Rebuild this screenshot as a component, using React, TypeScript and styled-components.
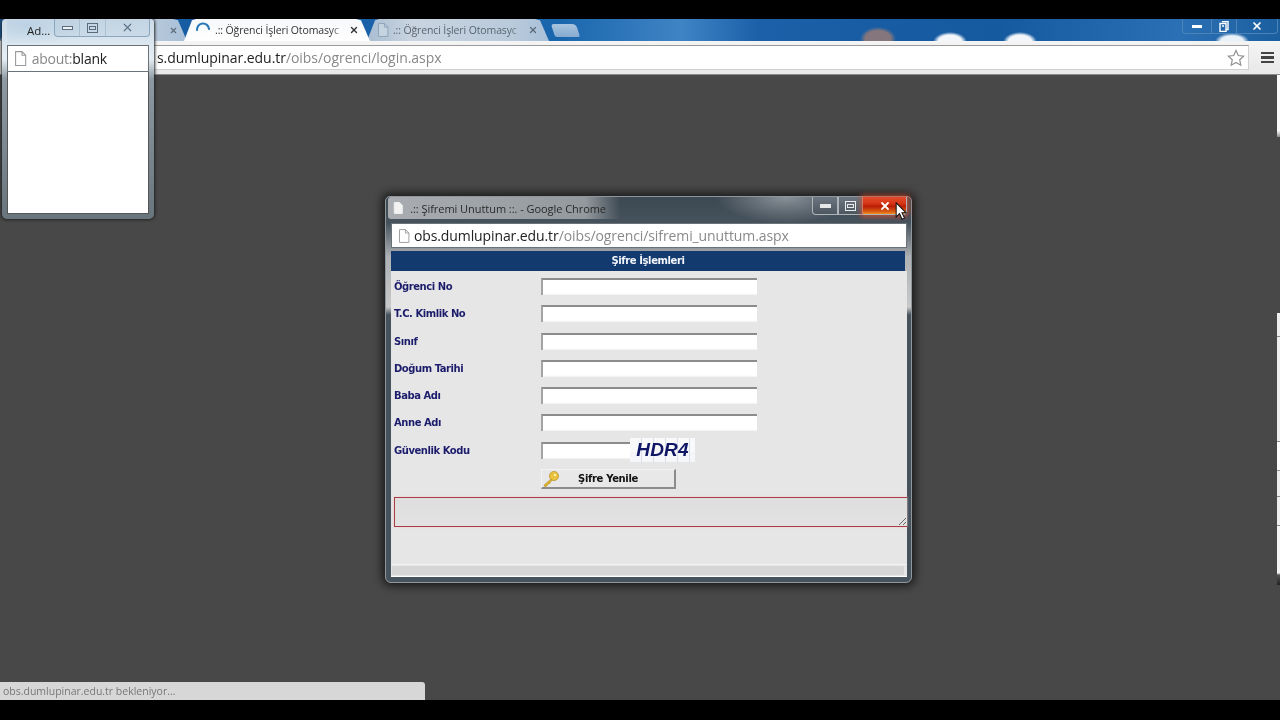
import React from "react";
import styled, { createGlobalStyle } from "styled-components";
import { X } from "lucide-react";

const Global = createGlobalStyle`
  html, body { margin: 0; padding: 0; background: #000; }
  #root { width: 1280px; height: 720px; overflow: hidden; }
`;

const uiFont = `"Open Sans", "Noto Sans", "Liberation Sans", sans-serif`;
const formFont = `"DejaVu Sans", "Liberation Sans", sans-serif`;

const Page = styled.div`
  width: 1280px; height: 720px; background: #000;
  display: flex; flex-direction: column; overflow: hidden;
  font-family: ${uiFont};
`;
const BlackBar = styled.div<{ $h: number }>`
  height: ${(p) => p.$h}px; flex: none; background: #000;
`;
const Screen = styled.div`
  flex: 1; position: relative; display: flex; flex-direction: column;
  overflow: hidden; filter: blur(0.35px); background: #484848;
`;

/* ---------- back browser ---------- */
const TabStrip = styled.div`
  height: 22px; flex: none; display: flex; align-items: flex-end; position: relative;
  background:
    radial-gradient(ellipse 18px 12px at 878px 20px, #84767c 0 70%, transparent 100%),
    radial-gradient(ellipse 17px 10px at 950px 23px, #f2f6fa 0 70%, transparent 100%),
    radial-gradient(ellipse 17px 10px at 1020px 23px, #f2f6fa 0 70%, transparent 100%),
    radial-gradient(ellipse 17px 8px at 1232px 22px, #e8f0f8 0 65%, transparent 100%),
    linear-gradient(90deg, #14589f 0, #1a66ad 560px, #3f84c4 680px, #1b60a8 760px, #155a9f 1000px, #2b70b4 1180px, #1c5f9f 1280px);
`;
const Tab = styled.div<{ $active?: boolean; $w: number; $pad: number }>`
  width: ${(p) => p.$w}px; flex: none; height: 22px; box-sizing: border-box;
  padding-left: ${(p) => p.$pad}px; padding-right: 11px;
  display: flex; align-items: center; gap: 4px;
  margin-right: -3px;
  clip-path: polygon(0 100%, 8px 6%, 12px 0, calc(100% - 14px) 0, calc(100% - 9px) 6%, 100% 100%);
  background: ${(p) => (p.$active ? "linear-gradient(#f6f8fb, #ffffff)" : "linear-gradient(90deg, #a9bdd2, #c9d4e0 25%, #b9cadb 80%, #a8c0d8)")};
  position: relative;
  z-index: ${(p) => (p.$active ? 2 : 1)};
`;
const TabTitle = styled.span<{ $active?: boolean }>`
  flex: 1; font-size: 10.5px; line-height: 22px; white-space: nowrap; letter-spacing: -0.12px;
  color: ${(p) => (p.$active ? "#333" : "#5a6570")};
  -webkit-mask-image: linear-gradient(90deg, #000 88%, rgba(0,0,0,.25));
  mask-image: linear-gradient(90deg, #000 88%, rgba(0,0,0,.25));
`;
const TabClose = styled(X)<{ $dim?: boolean }>`
  flex: none; color: ${(p) => (p.$dim ? "#5a6a78" : "#333")};
`;
const NewTab = styled.div`
  width: 25px; height: 13px; margin: 0 0 4px 7px; flex: none;
  background: linear-gradient(#a9c4de, #86abd0); border-radius: 3px 4px 2px 2px;
  transform: skewX(18deg);
`;
const WinControls = styled.div`
  position: absolute; right: 2px; top: 0; height: 15px; width: 96px;
  display: flex; align-items: center; color: #fff;
  border: 1px solid #4c83b8; border-top: none; border-radius: 0 0 4px 4px; box-sizing: border-box;
`;
const WinSlot = styled.div<{ $w: number; $line?: boolean }>`
  width: ${(p) => p.$w}px; height: 100%; display: flex; align-items: center; justify-content: center;
  border-left: ${(p) => (p.$line ? "1px solid #4c83b8" : "none")}; box-sizing: border-box;
`;
const Toolbar = styled.div`
  height: 34px; flex: none; box-sizing: border-box;
  background: linear-gradient(#f4f4f4, #e8e8e8);
  border-bottom: 1px solid #8a8a8a;
  padding: 4px 6px 4px 152px; display: flex; align-items: stretch;
`;
const Omnibox = styled.div`
  flex: 1; background: #fff; border: 1px solid #d0d0d0; border-left: none; border-top-color: #9a9a9a;
  display: flex; align-items: center; padding: 0 3px 0 5px;
`;
const UrlText = styled.span<{ $ls: number }>`
  font-size: 14px; color: #888; white-space: nowrap; letter-spacing: ${(p) => p.$ls}px;
`;
const UrlHost = styled.span`
  color: #222;
`;
const Spacer = styled.div`
  flex: 1;
`;
const MenuIcon = styled.div`
  width: 13px; margin-left: 12px; align-self: center;
  display: flex; flex-direction: column; gap: 2px;
`;
const MenuBar = styled.div`
  height: 2.5px; background: #444;
`;
const Content = styled.div`
  flex: 1; background: #484848;
`;

/* ---------- right sliver: another window behind ---------- */
const Sliver = styled.div<{ $top: number; $h: number; $lines?: boolean }>`
  position: absolute; left: 1277px; width: 3px;
  top: ${(p) => p.$top}px; height: ${(p) => p.$h}px;
  background: ${(p) => p.$lines
    ? "linear-gradient(#eee 0 23px, #8a8a8a 23px 24px, #eee 24px 128px, #8a8a8a 128px 129px, #fff 129px 157px, #999 157px 158px, #eee 158px 183px, #8a8a8a 183px 184px, #eee 184px 212px, #8a8a8a 212px 213px, #f4f4f4 213px 260px, #555 262px, #222 100%)"
    : "linear-gradient(#fafafa 0 90%, #888 100%)"};
`;

/* ---------- floating windows ---------- */
const SmallWindow = styled.div`
  position: absolute; left: 2px; top: 0; width: 152px; height: 200px; box-sizing: border-box;
  border-radius: 4px 4px 5px 5px;
  background: linear-gradient(#cbdbe8 0, #e6eef4 40px, #8d9aa3 60px, #68757d 100%);
  box-shadow: 0 0 3px 1px #222;
  display: flex; flex-direction: column; padding: 0 5px 5px 5px;
  z-index: 5;
`;
const SmallTitle = styled.div`
  height: 26px; flex: none; display: flex; justify-content: flex-end; align-items: flex-start; position: relative;
  background: radial-gradient(ellipse 60px 20px at 20px 6px, #bcd2e4, transparent);
`;
const SmallTitleText = styled.span`
  position: absolute; left: 20px; top: 4px; font-size: 11.5px; line-height: 16px; color: #222;
`;
const SmallControls = styled.div`
  width: 96px; height: 18px; margin-right: -1px; display: flex; color: #5f7488;
  border: 1px solid #8ba7bf; border-top: none; border-radius: 0 0 4px 4px; box-sizing: border-box;
  background: rgba(180, 200, 218, .35);
`;
const SmallSlot = styled.div<{ $w: number }>`
  width: ${(p) => p.$w}px; display: flex; align-items: center; justify-content: center;
  border-right: 1px solid #a9c0d2; box-sizing: border-box;
  &:last-child { border-right: none; }
`;
const MinGlyph = styled.div<{ $c: string }>`
  width: 11px; height: 4px; box-sizing: border-box; border: 1px solid ${(p) => p.$c}; background: #eef3f7;
`;
const MaxGlyph = styled.div<{ $c: string }>`
  width: 11px; height: 10px; box-sizing: border-box; border: 1px solid ${(p) => p.$c}; position: relative;
  display: flex; align-items: center; justify-content: center;
  &::after { content: ""; width: 5px; height: 2px; border: 1px solid ${(p) => p.$c}; }
`;
const AddrBar = styled.div<{ $h: number }>`
  height: ${(p) => p.$h}px; flex: none; background: #fff; box-sizing: border-box;
  border: 1px solid #6c7378; display: flex; align-items: center; padding-left: 6px; gap: 5px;
`;
const BlankPage = styled.div`
  flex: 1; background: #fff; border: 1px solid #555; border-top: none;
`;

const MainWindow = styled.div`
  position: absolute; left: 385px; top: 177px; width: 527px; height: 387px; box-sizing: border-box;
  border-radius: 5px 5px 6px 6px;
  border: 1px solid #8f979d;
  background: linear-gradient(#3c4852 0, #46525c 26px, #aeb2b5 60px, #c8c8c8 110px, #46525c 118px, #46525c 100%);
  box-shadow: 0 0 8px 3px rgba(15, 15, 15, .8);
  display: flex; flex-direction: column; padding: 0 4px 5px 5px;
  z-index: 6;
`;
const MainTitle = styled.div`
  height: 26px; flex: none; display: flex; align-items: flex-start; position: relative;
  background: radial-gradient(ellipse 70px 26px at 395px 0, rgba(190, 195, 200, .6), transparent);
`;
const TitleGlow = styled.div`
  display: flex; align-items: center; gap: 7px; height: 22px; margin-left: -3px; padding: 0 14px 0 5px;
  background: linear-gradient(90deg, #a9adb1, #94999e 85%, transparent);
  border-radius: 3px;
`;
const TitleText = styled.span`
  font-size: 11px; color: #2a2a2a; white-space: nowrap; letter-spacing: -0.05px;
`;
const MainControls = styled.div`
  margin-left: auto; width: 95px; height: 18px; display: flex; box-sizing: border-box; color: #fff;
`;
const MainSlot = styled.div<{ $w: number; $close?: boolean }>`
  width: ${(p) => p.$w}px; display: flex; align-items: center; justify-content: center; box-sizing: border-box;
  border: 1px solid #aeb4b8; border-top: none; border-left-width: ${(p) => (p.$close ? 0 : 1)}px;
  background: ${(p) => p.$close ? "linear-gradient(#e0492a 0, #d9391b 35%, #b81e05 55%, #d95b14 85%, #f09020 100%)" : "linear-gradient(#6c7680, #4c5761)"};
  border-radius: ${(p) => (p.$close ? "0 0 4px 0" : "0")};
  box-shadow: ${(p) => (p.$close ? "0 0 5px 2px rgba(225, 80, 45, .75)" : "none")};
  &:first-child { border-radius: 0 0 0 4px; }
`;
const UrlBig = styled.span`
  font-size: 14px; color: #8a8a8a; white-space: nowrap; letter-spacing: -0.1px; margin-left: -1px;
`;
const FormHeader = styled.div`
  height: 20px; flex: none; margin: 3px 2px 0 0; background: #123a6f; color: #f2f5fa;
  font: bold 10px/20px ${formFont}; text-align: center; letter-spacing: -0.4px;
`;
const FormBody = styled.div`
  flex: 1; background: #e6e6e6; padding-top: 2px; display: flex; flex-direction: column; min-height: 0;
`;
const Row = styled.div`
  height: 27.25px; flex: none; display: grid; grid-template-columns: 150px auto 1fr; align-items: center;
`;
const Label = styled.label`
  padding-left: 3px; font: bold 10px ${formFont}; color: #1c1c6c; letter-spacing: -0.45px; white-space: nowrap;
`;
const Input = styled.div<{ $w?: number }>`
  width: ${(p) => p.$w ?? 216}px; height: 17px; box-sizing: border-box; background: linear-gradient(#fff 88%, #f0f0f0);
  border-top: 2px solid #8c8c8c; border-left: 2px solid #a4a4a4;
`;
const Captcha = styled.div`
  width: 65px; height: 24px; background:
    repeating-linear-gradient(90deg, transparent 0 11px, #d8dde8 11px 12px),
    linear-gradient(#f8f9fb 60%, #e0e4ee 62%, #f5f6f9 65%);
  color: #0f1666; font: italic bold 19px "Liberation Sans", sans-serif; text-align: center; line-height: 24px; letter-spacing: 0.2px;
`;
const InlineField = styled.div`
  display: flex; align-items: center;
`;
const ButtonRow = styled.div`
  margin: 5px 0 0 150px;
`;
const RenewButton = styled.div`
  width: 135px; height: 20px; box-sizing: border-box; position: relative;
  background: #e8e8e8; border-right: 2px solid #8c8c8c; border-bottom: 2px solid #8c8c8c; border-top: 1px solid #f2f2f2; border-left: 1px solid #f2f2f2;
  font: bold 10px/18px ${formFont}; letter-spacing: -0.35px; color: #111; text-align: center;
`;
const KeyIcon = styled.svg`
  position: absolute; left: 0; top: 0;
`;
const MessageBox = styled.div`
  height: 30px; flex: none; margin: 8px 0 0 3px; box-sizing: border-box; position: relative;
  border: 1px solid #a83e44; border-right: none; background: linear-gradient(#dedede, #e2e2e2);
  box-shadow: 0 0 2px #f3c6c6;
`;
const ResizeGrip = styled.svg`
  position: absolute; right: 0; bottom: 0;
`;
const Fill = styled.div`
  flex: 1;
`;
const HScroll = styled.div`
  height: 13px; flex: none; border-top: 1px solid #f2f2f2; padding: 1px 3px 1px 1px; box-sizing: border-box; border-bottom: 1px solid #fff;
`;
const HThumb = styled.div`
  height: 100%; background: #d6d6d6; border-radius: 1px;
`;
const Cursor = styled.svg`
  position: absolute; left: 509px; top: 5px; z-index: 9;
`;
const StatusBubble = styled.div`
  position: absolute; left: 0; bottom: 0; width: 425px; height: 18px; background: #d7d7d7;
  border-radius: 0 3px 0 0; font-size: 10.5px; line-height: 18px; color: #777; padding-left: 3px; box-sizing: border-box;
  z-index: 7; white-space: nowrap;
`;

const DocIcon = ({ size = 14, c = "#a9a9a9", fill = "#fff" }: { size?: number; c?: string; fill?: string }) => (
  <svg width={size * 0.85} height={size} viewBox="0 0 12 14" style={{ flex: "none" }}>
    <path d="M1.5.5h6l3.5 3.5v9.5h-9.5z" fill={fill} stroke={c} />
    <path d="M7.5.5v3.5h3.5" fill="none" stroke={c} />
  </svg>
);

const Spinner = () => (
  <svg width="16" height="14" viewBox="0 0 16 14" style={{ flex: "none", marginTop: -4 }}>
    <path d="M2 9A6 6 0 0 1 14 8" fill="none" stroke="#2b78b8" strokeWidth="2.2" strokeLinecap="round" />
  </svg>
);

const Star = () => (
  <svg width="18" height="18" viewBox="0 0 18 18">
    <path d="M9 1.5l2.3 5 5.4.6-4 3.7 1.1 5.4L9 13.5l-4.8 2.7 1.1-5.4-4-3.7 5.4-.6z" fill="#fff" stroke="#8f8f8f" strokeWidth="1.2" />
  </svg>
);

const Restore = () => (
  <svg width="10" height="11" viewBox="0 0 10 11">
    <path d="M3 .5h6v8H7M1 2.5h6v8H1z M3 5h2" fill="none" stroke="#fff" strokeWidth="1.4" />
  </svg>
);

const Field = ({ label }: { label: string }) => (
  <Row>
    <Label>{label}</Label>
    <Input />
  </Row>
);

const App = () => (
  <Page>
    <Global />
    <BlackBar $h={19} />
    <Screen>
      <TabStrip>
        <Tab $w={187} $pad={165}>
          <Spacer />
          <TabClose $dim size={9} strokeWidth={3} style={{ marginRight: 2 }} />
        </Tab>
        <Tab $active $w={186} $pad={11}>
          <Spinner />
          <TabTitle $active>.:: Öğrenci İşleri Otomasyc</TabTitle>
          <TabClose size={10} strokeWidth={3.2} />
        </Tab>
        <Tab $w={182} $pad={10}>
          <DocIcon size={14} c="#8ea4b8" fill="#c6d4e2" />
          <TabTitle>.:: Öğrenci İşleri Otomasyc</TabTitle>
          <TabClose $dim size={10} strokeWidth={3} />
        </Tab>
        <NewTab />
        <WinControls>
          <WinSlot $w={28}><svg width="10" height="3"><rect width="10" height="3" fill="#fff" /></svg></WinSlot>
          <WinSlot $w={25} $line><Restore /></WinSlot>
          <WinSlot $w={41} $line><X size={12} strokeWidth={3.4} /></WinSlot>
        </WinControls>
      </TabStrip>
      <Toolbar>
        <Omnibox>
          <UrlText $ls={-0.05}><UrlHost>s.dumlupinar.edu.tr</UrlHost>/oibs/ogrenci/login.aspx</UrlText>
          <Spacer />
          <Star />
        </Omnibox>
        <MenuIcon><MenuBar /><MenuBar /><MenuBar /></MenuIcon>
      </Toolbar>
      <Content />

      <Sliver $top={56} $h={62} />
      <Sliver $lines $top={294} $h={272} />

      <SmallWindow>
        <SmallTitle>
          <SmallTitleText>Ad...</SmallTitleText>
          <SmallControls>
            <SmallSlot $w={26}><MinGlyph $c="#5a6c7e" /></SmallSlot>
            <SmallSlot $w={26}><MaxGlyph $c="#5a6c7e" /></SmallSlot>
            <SmallSlot $w={44}><X size={13} strokeWidth={2.2} /></SmallSlot>
          </SmallControls>
        </SmallTitle>
        <AddrBar $h={27}>
          <DocIcon size={15} c="#9a9a9a" />
          <UrlText $ls={-0.25}>about:<UrlHost>blank</UrlHost></UrlText>
        </AddrBar>
        <BlankPage />
      </SmallWindow>

      <MainWindow>
        <MainTitle>
          <TitleGlow>
            <DocIcon size={12} c="#f2f2f2" fill="#f2f2f2" />
            <TitleText>.:: Şifremi Unuttum ::. - Google Chrome</TitleText>
          </TitleGlow>
          <MainControls>
            <MainSlot $w={26}><svg width="11" height="4"><rect width="11" height="4" fill="#e4e6e8" /></svg></MainSlot>
            <MainSlot $w={25}><MaxGlyph $c="#e8eaec" /></MainSlot>
            <MainSlot $close $w={44}><X size={12} strokeWidth={3.6} /></MainSlot>
          </MainControls>
        </MainTitle>
        <AddrBar $h={25}>
          <DocIcon size={14} c="#a0a0a0" />
          <UrlBig><UrlHost>obs.dumlupinar.edu.tr</UrlHost>/oibs/ogrenci/sifremi_unuttum.aspx</UrlBig>
        </AddrBar>
        <FormHeader>Şifre İşlemleri</FormHeader>
        <FormBody>
          <Field label="Öğrenci No" />
          <Field label="T.C. Kimlik No" />
          <Field label="Sınıf" />
          <Field label="Doğum Tarihi" />
          <Field label="Baba Adı" />
          <Field label="Anne Adı" />
          <Row>
            <Label>Güvenlik Kodu</Label>
            <InlineField>
              <Input $w={89} />
              <Captcha>HDR4</Captcha>
            </InlineField>
          </Row>
          <ButtonRow>
            <RenewButton>
              <KeyIcon width="18" height="18" viewBox="0 0 18 18">
                <circle cx="12" cy="6" r="4.6" fill="#e8c23c" stroke="#b8902a" strokeWidth=".7" />
                <circle cx="13" cy="5" r="1.2" fill="#fff3b0" />
                <path d="M9 9L2 15l1 2 2-1 1-2 2-.5 1-2.5 1-.5z" fill="#dcb336" stroke="#b8902a" strokeWidth=".6" />
              </KeyIcon>
              Şifre Yenile
            </RenewButton>
          </ButtonRow>
          <MessageBox>
            <ResizeGrip width="9" height="9" viewBox="0 0 9 9">
              <path d="M1 8l7-7M5 8l3-3" stroke="#666" strokeWidth="1" />
            </ResizeGrip>
          </MessageBox>
          <Fill />
          <HScroll><HThumb /></HScroll>
        </FormBody>
        <Cursor width="12" height="18" viewBox="0 0 10 16">
          <path d="M.7.7v12.6l3-3 2.2 5 2.2-1-2.2-4.7H9.6z" fill="#fff" stroke="#111" strokeWidth=".9" />
        </Cursor>
      </MainWindow>

      <StatusBubble>obs.dumlupinar.edu.tr bekleniyor...</StatusBubble>
    </Screen>
    <BlackBar $h={20} />
  </Page>
);

export default App;
